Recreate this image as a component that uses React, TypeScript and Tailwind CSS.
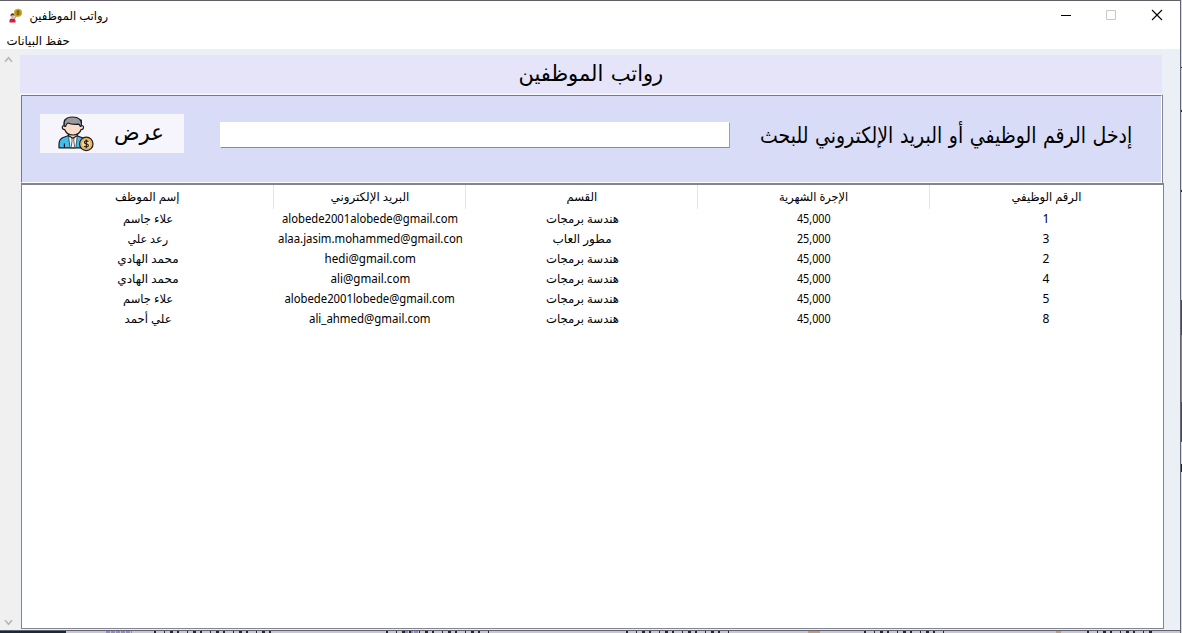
import React, { useLayoutEffect, useRef, useState } from "react";

type FitProps = { w: number; className?: string; children: string };

function Fit({ w, className = "", children }: FitProps) {
  const ref = useRef<HTMLSpanElement>(null);
  const [scale, setScale] = useState(1);
  useLayoutEffect(() => {
    if (ref.current) setScale(w / ref.current.offsetWidth);
  }, [w, children]);
  return (
    <span className="flex shrink-0 justify-center" style={{ width: w }}>
      <span ref={ref} dir="auto" className={`inline-block shrink-0 whitespace-nowrap ${className}`} style={{ transform: `scaleX(${scale})` }}>
        {children}
      </span>
    </span>
  );
}

type Cell = [string, number];
const headers: Cell[] = [
  ["إسم الموظف", 65],
  ["البريد الإلكتروني", 79],
  ["القسم", 31],
  ["الإجرة الشهرية", 69],
  ["الرقم الوظيفي", 70],
];
const rows: Cell[][] = [
  [["علاء جاسم", 50], ["alobede2001alobede@gmail.com", 176], ["هندسة برمجات", 73], ["45,000", 34], ["1", 7]],
  [["رعد علي", 41], ["alaa.jasim.mohammed@gmail.con", 185], ["مطور العاب", 59], ["25,000", 34], ["3", 7]],
  [["محمد الهادي", 61], ["hedi@gmail.com", 91], ["هندسة برمجات", 73], ["45,000", 34], ["2", 7]],
  [["محمد الهادي", 61], ["ali@gmail.com", 80], ["هندسة برمجات", 73], ["45,000", 34], ["4", 7]],
  [["علاء جاسم", 50], ["alobede2001lobede@gmail.com", 170], ["هندسة برمجات", 73], ["45,000", 34], ["5", 7]],
  [["علي أحمد", 47], ["ali_ahmed@gmail.com", 122], ["هندسة برمجات", 73], ["45,000", 34], ["8", 7]],
];
const grid = "grid grid-cols-[252px_192px_232px_232px_232px]";

function AppIcon() {
  return (
    <svg width="15" height="16" viewBox="0 0 15 16">
      <path d="M0.5 14.5v-2q0-2 2.2-2h1.6q2.2 0 2.2 2v2z" fill="#cf1f45" />
      <circle cx="3.5" cy="8" r="2" fill="#e9b0a0" />
      <path d="M1.5 8q0-2.8 2-2.8T5.6 8L4 7z" fill="#4b3544" />
      <path d="M5.3 10.5 7.6 7.8" stroke="#a99a86" strokeWidth="1.3" />
      <circle cx="9" cy="4.8" r="4.1" fill="#d6ab27" />
      <circle cx="9" cy="4.8" r="2.9" fill="#b58a1b" />
      <path d="M10.2 3.2H8.6q-1 .8.4 1.6t.3 1.6H7.8M9 2.4v4.8" fill="none" stroke="#665018" strokeWidth=".8" />
    </svg>
  );
}

function EmployeeIcon() {
  return (
    <svg width="36" height="36" viewBox="0 0 36 36" fill="none" stroke="#171b20" strokeWidth="1.2" strokeLinejoin="round">
      <path d="M1 31.8v-3.3q0-5.5 4.2-7l4.8-1.8h9l4.8 1.8q4.2 1.5 4.2 7v3.3z" fill="#45bdea" />
      <path d="m10.5 19.5 1.5 12.3h5.8l1.5-12.3z" fill="#fff" strokeWidth=".7" />
      <path d="m13.6 22.5 1.3-.8 1.3.8-.5 1.6 1 7.5h-3.6l1-7.5z" fill="#f5f7fa" strokeWidth=".7" />
      <path d="M10.5 17.2v2.6l4.4 2.4 4.3-2.4v-2.6z" fill="#f7d0b5" />
      <path d="M6.4 31.8v-4.3" />
      <path d="M6.5 9.5q-2.2-.2-2.2 1.8 0 2.3 2.4 2.2 1.6 5.5 8.2 5.5t8.2-5.5q2.4.1 2.4-2.2 0-2-2.2-1.8V4H6.5z" fill="#fbdcc8" />
      <path d="M6.1 10.2Q4.8 1 14.2 1q10.4 0 9.1 9.2l-1.1.2q-.5-1.9-2-2.2-7 .5-10.2-1.2-1.7.8-2.4 3.3z" fill="#999b9e" />
      <circle cx="28.3" cy="27.9" r="6.7" fill="#f6bd68" />
      <circle cx="28.3" cy="27.9" r="4.8" fill="#ffd486" stroke="#a5783e" strokeWidth=".4" />
      <path d="M30.4 25.7q-.8-.8-2.1-.8c-2.5 0-2.5 2.8 0 3 2.8.2 2.8 3.1 0 3.1q-1.5 0-2.2-1m2.2-6.4v8.6" strokeWidth="1.1" />
    </svg>
  );
}

const Chevron = ({ down = false }: { down?: boolean }) => (
  <svg width="9" height="7" viewBox="0 0 9 7" fill="none" stroke="#b6b6b6" strokeWidth="1.7">
    <path d={down ? "m1 1.2 3.5 4L8 1.2" : "m1 5.8 3.5-4L8 5.8"} />
  </svg>
);

export default function App() {
  return (
    <div className="flex h-[633px] w-[1182px] overflow-hidden bg-[#eaf0f5] font-['Noto_Sans','DejaVu_Sans',sans-serif] text-black">
      <div className="flex h-full w-[1180px] shrink-0 flex-col border-t border-[#626067]">
        <header className="flex h-[29px] shrink-0 items-center bg-white pl-[9px]">
          <AppIcon />
          <div className="ml-[5px]"><Fit w={79} className="text-[12px]">رواتب الموظفين</Fit></div>
          <svg className="mb-[2px] ml-auto mr-[17px]" width="103" height="12" viewBox="0 0 103 12" fill="none" stroke="#000">
            <path d="M1 6.5h10" />
            <path d="M46.5 1.5h9v9h-9z" stroke="#c8c8c8" />
            <path d="m92 1 10 10m0-10-10 10" strokeWidth="1.1" />
          </svg>
        </header>
        <nav className="flex h-[19px] shrink-0 items-center bg-white pl-[7px] pt-[2px]">
          <Fit w={63} className="text-[12px] leading-[16px]">حفظ البيانات</Fit>
        </nav>
        <div className="flex min-h-0 flex-1">
          <aside className="flex w-5 shrink-0 flex-col items-center justify-between bg-[#f0f0f0] pr-[3px] pt-[7px] pb-1">
            <Chevron /><Chevron down />
          </aside>
          <main className="flex w-[1144px] shrink-0 flex-col pt-[6px]">
            <h1 className="mr-[2px] flex h-[38px] shrink-0 items-start justify-center bg-[#e6e4f9]">
              <Fit w={145} className="text-[22px] leading-[35px] [word-spacing:2px]">رواتب الموظفين</Fit>
            </h1>
            <div className="mt-px h-[89px] w-[1143px] shrink-0 border border-b-0 border-l-0 border-[#f8f8fc] border-r-[#85858f]">
              <section className="ml-px flex h-[88px] w-[1141px] border border-[#777985] border-r-white border-b-white bg-[#d9dcf7]">
                <button className="ml-[18px] mt-[18px] flex h-[39px] w-36 shrink-0 items-center bg-[#f5f5fb] pl-[18px]">
                  <EmployeeIcon />
                  <div className="-mt-[5px] ml-5"><Fit w={50} className="text-[22px] leading-[36px]">عرض</Fit></div>
                </button>
                <input aria-label="بحث" className="ml-9 mt-[26px] h-[26px] w-[510px] shrink-0 border border-white border-r-[#a0a0a0] border-b-[#8c8c8c] bg-white px-1 outline-none" />
                <div className="ml-[30px] mt-[19px]"><Fit w={372} className="text-[22px] leading-[38px] [word-spacing:2px]">إدخل الرقم الوظيفي أو البريد الإلكتروني للبحث</Fit></div>
              </section>
            </div>
            <section className="ml-px h-[446px] w-[1143px] shrink-0 border border-t-2 border-[#82858f] bg-white">
              <div className={`${grid} h-6`}>
                {headers.map(([text, w], i) => (
                  <div key={text} className={`flex items-center justify-center ${i < 4 ? "border-r border-[#e4e4e4]" : ""}`}>
                    <Fit w={w} className="text-[12px] leading-5">{text}</Fit>
                  </div>
                ))}
              </div>
              {rows.map((row, r) => (
                <div key={r} className={`${grid} h-5`}>
                  {row.map(([text, w], i) => (
                    <div key={i} className="flex items-center justify-center"><Fit w={w} className="text-[12px] leading-5">{text}</Fit></div>
                  ))}
                </div>
              ))}
            </section>
          </main>
        </div>
        <footer className="flex h-[3px] shrink-0 border-t border-[#626571] bg-[#c9c6d2]">
          <span className="w-[66px] shrink-0 bg-[#172b37]" />
          <svg width="1114" height="2" viewBox="0 0 1114 2" fill="none">
            <path d="M40 1h26m272 0h15" stroke="#9486c8" strokeWidth="2" strokeDasharray="4 1" />
            <path d="M88 1h125m107 0h105m135 0h106m132 0h82m141 0h65" stroke="#25262e" strokeWidth="2" strokeDasharray="2 8 1 5 3 4" />
            <path d="M742 1h12m236 0h5" stroke="#c5997c" strokeWidth="2" />
          </svg>
        </footer>
      </div>
      <svg width="2" height="633" viewBox="0 0 2 633">
        <path d="M0 0h2v633H0z" fill="#d5dbe5" />
        <path d="M0 0h1v633H0z" fill="#656472" />
        <path d="M1 67h1v1H1zm0 43h1v2H1zm0 80h1v2H1zm0 274h1v8H1z" fill="#22242c" />
        <path d="M1 300h1v35H1zm0 102h1v40H1z" fill="#4b4953" />
        <path d="M1 335h1v67H1z" fill="#9a777b" />
      </svg>
    </div>
  );
}
